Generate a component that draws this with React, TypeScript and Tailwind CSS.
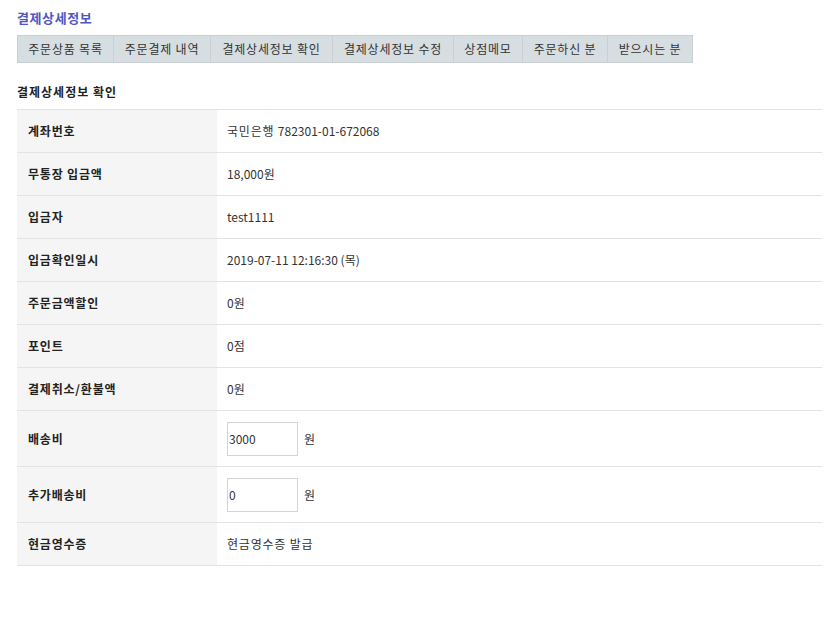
import React from "react";

const tabs: [string, number][] = [
  ["주문상품 목록", 96],
  ["주문결제 내역", 97],
  ["결제상세정보 확인", 122],
  ["결제상세정보 수정", 121],
  ["상점메모", 69],
  ["주문하신 분", 85],
  ["받으시는 분", 85],
];

type Row = { label: string; value?: React.ReactNode; input?: string };
const K = ({ children }: { children: React.ReactNode }) => (
  <span className="tracking-[0.8px]">{children}</span>
);
const rows: Row[] = [
  { label: "계좌번호", value: <><K>국민은행 </K>782301-01-672068</> },
  { label: "무통장 입금액", value: "18,000원" },
  { label: "입금자", value: "test1111" },
  { label: "입금확인일시", value: "2019-07-11 12:16:30 (목)" },
  { label: "주문금액할인", value: "0원" },
  { label: "포인트", value: "0점" },
  { label: "결제취소/환불액", value: "0원" },
  { label: "배송비", input: "3000" },
  { label: "추가배송비", input: "0" },
  { label: "현금영수증", value: <K>현금영수증 발급</K> },
];

export default function App() {
  return (
    <div
      className="min-h-[621px] bg-white pl-[17px] pr-[11px] pt-[8px] text-[12px] text-[#333]"
      style={{ fontFamily: '"Noto Sans CJK KR", "Noto Sans", sans-serif' }}
    >
      <h1 className="h-[20px] text-[13px] font-bold leading-[20px] tracking-[0.6px] text-[#4f56c4]">결제상세정보</h1>
      <div className="mt-[7px] flex">
        <div className="flex border border-[#c9cfd3] bg-[#d7dee2]">
          {tabs.map(([t, w], i) => (
            <div
              key={t}
              className={`flex h-[26px] items-center justify-center text-[12px] tracking-[0.8px] text-[#333] ${i > 0 ? "border-l border-[#c9cfd3]" : ""}`}
              style={{ width: i === 0 ? w - 1 : w }}
            >
              {t}
            </div>
          ))}
        </div>
      </div>
      <h2 className="mt-[19px] h-[20px] text-[12px] font-bold leading-[20px] tracking-[1px] text-[#222]">결제상세정보 확인</h2>
      <div className="mt-[7px] border-b border-[#e3e3e3]">
        {rows.map((r) => (
          <div key={r.label} className="flex border-t border-[#e3e3e3]">
            <div
              className={`flex w-[200px] shrink-0 items-center bg-[#f5f5f5] pl-[11px] font-bold tracking-[0.8px] text-[#222] ${r.input !== undefined ? "h-[55px]" : "h-[42px]"}`}
            >
              {r.label}
            </div>
            <div className="flex flex-1 items-center pl-[10px] text-[#333]">
              {r.input !== undefined ? (
                <>
                  <div className="flex h-[34px] w-[71px] items-center border border-[#d4d4d4] pl-[1px] text-[#333]">
                    {r.input}
                  </div>
                  <span className="ml-[6px]">원</span>
                </>
              ) : (
                <span className="whitespace-pre">{r.value}</span>
              )}
            </div>
          </div>
        ))}
      </div>
    </div>
  );
}
